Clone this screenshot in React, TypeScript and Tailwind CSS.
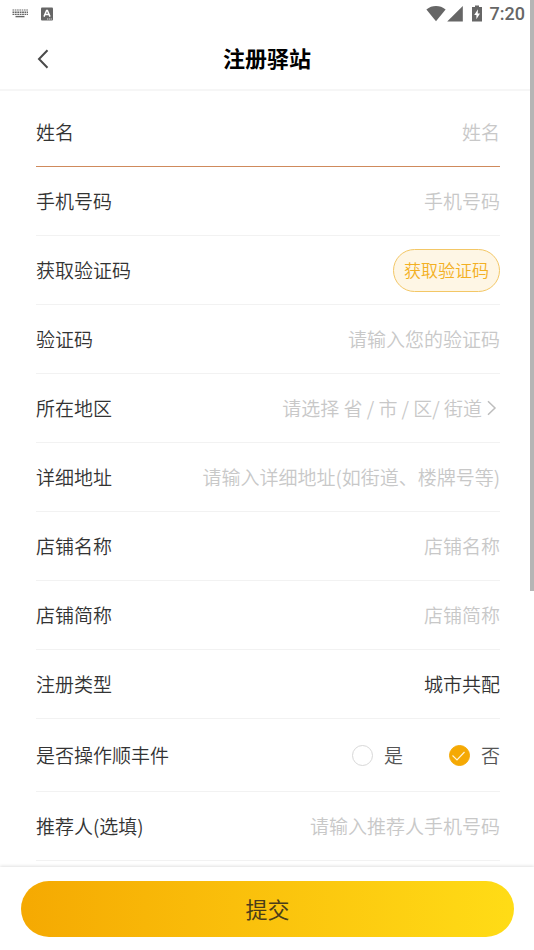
import React, { useState } from 'react';

interface RowProps {
  label: string;
  htmlFor?: string;
  active?: boolean;
  tall?: boolean;
  children: React.ReactNode;
}

const Row: React.FC<RowProps> = ({ label, htmlFor, active, tall, children }) => {
  return (
    <div
      className={`flex items-center justify-between gap-4 border-b ${tall ? 'h-[73px]' : 'h-[69px]'} ${active ? 'border-[#cf8a5c]' : 'border-[#f2f2f2]'}`}
    >
      {htmlFor ? (
        <label htmlFor={htmlFor} className="shrink-0">{label}</label>
      ) : (
        <span className="shrink-0">{label}</span>
      )}
      {children}
    </div>
  );
};

interface FieldProps {
  id: string;
  label: string;
  placeholder: string;
  active?: boolean;
  type?: string;
}

const Field: React.FC<FieldProps> = ({ id, label, placeholder, active, type = 'text' }) => {
  return (
    <Row label={label} htmlFor={id} active={active}>
      <input
        id={id}
        type={type}
        placeholder={placeholder}
        className="min-w-0 flex-1 bg-transparent text-right outline-none placeholder:text-[#c8c8c8]"
      />
    </Row>
  );
};

interface ChoiceProps {
  text: string;
  checked: boolean;
  onSelect: () => void;
}

const Choice: React.FC<ChoiceProps> = ({ text, checked, onSelect }) => {
  return (
    <label className="flex items-center gap-[11px] text-[#555555]">
      <span className="grid h-[21px] w-[21px] place-items-center">
        <input
          type="radio"
          name="sf"
          checked={checked}
          onChange={onSelect}
          className="col-start-1 row-start-1 h-[21px] w-[21px] appearance-none rounded-full border border-[#d8d8d8] bg-white checked:border-[#f5a904] checked:bg-[#f5a904]"
        />
        {checked && (
          <svg className="pointer-events-none col-start-1 row-start-1 h-[21px] w-[21px]" viewBox="0 0 21 21" fill="none" stroke="#fff3d6" strokeWidth="1.2">
            <path d="M3.5 10.5 8 15l7.5-8" />
          </svg>
        )}
      </span>
      {text}
    </label>
  );
};

const StatusBar: React.FC = () => {
  return (
    <div className="flex h-7 items-center justify-between pb-px pl-3 pr-[9px] text-[#666666]">
      <div className="flex items-center gap-[13px]">
        <svg width="16" height="9" viewBox="0 0 16 9" fill="none" stroke="currentColor">
          <path d="M0.5 1H16" strokeWidth="1.2" strokeDasharray="1.6 0.7" />
          <path d="M0.5 3.2H16M0.5 5.4H16" strokeWidth="1.4" strokeDasharray="1.8 0.6" />
          <path d="M3.5 7.6H12.5" strokeWidth="1.4" />
        </svg>
        <svg width="12" height="14" viewBox="0 0 12 14">
          <rect y="0.5" width="12" height="13" rx="1" fill="currentColor" />
          <path d="M3 9.6 5.6 3.4h.8L9 9.6M4 7.6h4" fill="none" stroke="white" strokeWidth="1.5" />
          <path d="M6 12h5" stroke="white" strokeWidth="0.8" strokeDasharray="1.2 0.6" />
        </svg>
      </div>
      <div className="flex items-center">
        <svg width="20" height="17" viewBox="0 0 20 17" fill="currentColor">
          <path d="M0.4 4.4C6-.1 14-.1 19.6 4.4L10 16.2Z" />
        </svg>
        <svg className="ml-px" width="16" height="17" viewBox="0 0 16 17" fill="currentColor">
          <path d="M15.8 1v15.6H0.2Z" />
        </svg>
        <svg className="ml-[9px]" width="10" height="17" viewBox="0 0 10 17">
          <path d="M3 0.5h4V2h3v14.5H0V2h3Z" fill="currentColor" />
          <path d="M6 4.2 2.2 10h2.2v4.3L8 8.4H5.7Z" fill="white" />
        </svg>
        <span className="ml-2 font-[Roboto] text-[18px] font-medium leading-7">7:20</span>
      </div>
    </div>
  );
};

const App: React.FC = () => {
  const [sf, setSf] = useState(false);

  return (
    <div className="relative flex min-h-screen flex-col bg-white font-['Noto_Sans_CJK_SC','Noto_Sans',sans-serif] text-[19px] font-[350] leading-7 text-[#333333]">
      <header className="border-b-2 border-[#f6f6f6]">
        <StatusBar />
        <div className="grid h-[61px] grid-cols-[42px_1fr_42px] items-center px-[22px]">
          <button type="button" aria-label="返回" className="flex h-10 items-center justify-center">
            <svg width="12" height="20" viewBox="0 0 12 20" fill="none" stroke="#4a4a4a" strokeWidth="2">
              <path d="M10.5 1.2 2 10l8.5 8.8" />
            </svg>
          </button>
          <h1 className="pb-1 text-center text-[22px] font-bold text-black">注册驿站</h1>
        </div>
      </header>

      <form className="flex flex-1 flex-col" onSubmit={(e) => e.preventDefault()}>
        <div className="pb-[6px] pl-9 pr-[34px] pt-[7px]">
          <Field id="name" label="姓名" placeholder="姓名" active />
          <Field id="phone" label="手机号码" placeholder="手机号码" type="tel" />
          <Row label="获取验证码">
            <button
              type="button"
              className="h-[43px] rounded-full border border-[#f3c766] bg-[#fef6e5] px-[10px] text-[17px] text-[#f3b023]"
            >
              获取验证码
            </button>
          </Row>
          <Field id="code" label="验证码" placeholder="请输入您的验证码" />
          <Row label="所在地区">
            <button type="button" className="flex items-center gap-1 pr-[3px] text-[#c8c8c8]">
              请选择 省 / 市 / 区/ 街道
              <svg width="11" height="16" viewBox="0 0 11 16" fill="none" stroke="#bdbdbd" strokeWidth="1.5">
                <path d="M2 1.2 9 8l-7 6.8" />
              </svg>
            </button>
          </Row>
          <Field id="address" label="详细地址" placeholder="请输入详细地址(如街道、楼牌号等)" />
          <Field id="shop" label="店铺名称" placeholder="店铺名称" />
          <Field id="short" label="店铺简称" placeholder="店铺简称" />
          <Row label="注册类型">
            <span>城市共配</span>
          </Row>
          <Row label="是否操作顺丰件" tall>
            <div className="flex items-center gap-[46px]">
              <Choice text="是" checked={sf} onSelect={() => setSf(true)} />
              <Choice text="否" checked={!sf} onSelect={() => setSf(false)} />
            </div>
          </Row>
          <Field id="referrer" label="推荐人(选填)" placeholder="请输入推荐人手机号码" type="tel" />
        </div>

        <footer className="sticky bottom-0 mt-auto bg-white pb-[13px] pl-[21px] pr-5 pt-[14px] shadow-[0_-1px_3px_rgba(0,0,0,0.12)]">
          <button
            type="submit"
            className="h-14 w-full rounded-full bg-linear-to-r from-[#f5a902] to-[#ffdc16] pb-[2px] text-[22px] font-normal text-[#4a3c1a]"
          >
            提交
          </button>
        </footer>
      </form>

      {/* scroll thumb */}
      <div className="absolute right-0 top-0 h-[591px] w-1 bg-[#b5b5b5]" />
    </div>
  );
};

export default App;
